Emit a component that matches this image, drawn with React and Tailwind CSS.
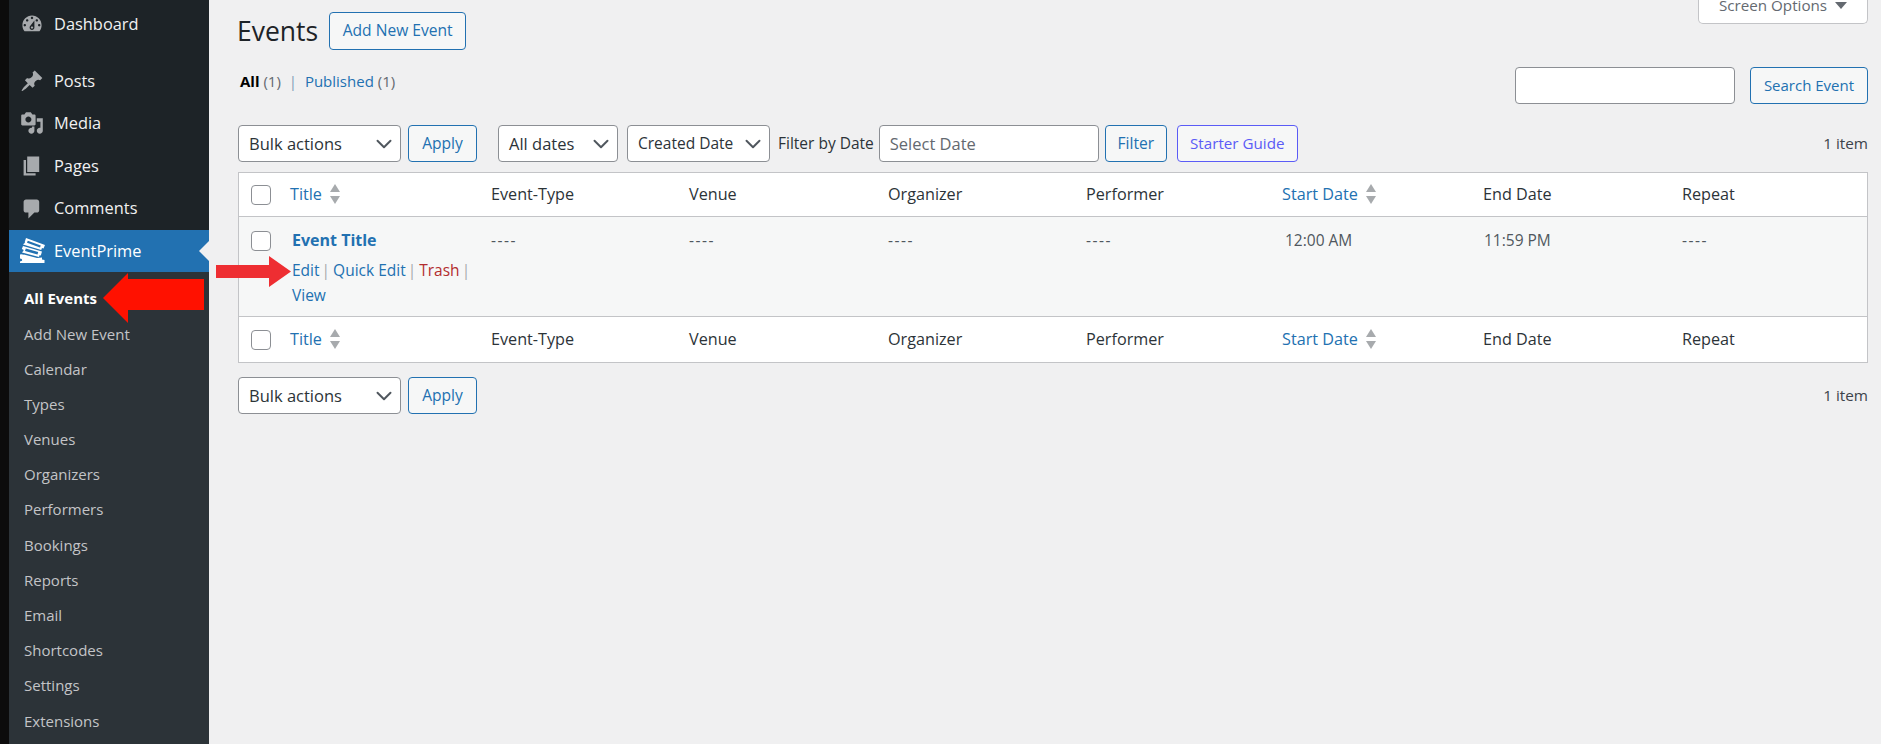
import { ChevronDown } from 'lucide-react'

const Icon = ({ d, className = '' }) => (
  <svg viewBox="0 0 20 20" className={`w-[24px] h-[24px] ${className}`} fill="currentColor">
    <path fillRule="evenodd" d={d} />
  </svg>
)

const icons = {
  dashboard: 'M3.76 16h12.48c1.1-1.37 1.76-3.11 1.76-5 0-4.42-3.58-8-8-8s-8 3.58-8 8c0 1.89.66 3.63 1.76 5zM10 4c.55 0 1 .45 1 1s-.45 1-1 1-1-.45-1-1 .45-1 1-1zM6 6c.55 0 1 .45 1 1s-.45 1-1 1-1-.45-1-1 .45-1 1-1zm8 0c.55 0 1 .45 1 1s-.45 1-1 1-1-.45-1-1 .45-1 1-1zm-5.37 5.55L12 7v6c0 1.1-.9 2-2 2s-2-.9-2-2c0-.57.24-1.08.63-1.45zM4 10c.55 0 1 .45 1 1s-.45 1-1 1-1-.45-1-1 .45-1 1-1zm12 0c.55 0 1 .45 1 1s-.45 1-1 1-1-.45-1-1 .45-1 1-1zm-5 3c0-.55-.45-1-1-1s-1 .45-1 1 .45 1 1 1 1-.45 1-1z',
  posts: 'M10.44 3.02l1.82-1.82 6.36 6.35-1.83 1.82c-1.05-.68-2.48-.57-3.41.36l-.75.75c-.92.93-1.04 2.35-.35 3.41l-1.83 1.82-2.41-2.41-2.8 2.79c-.42.42-3.38 2.71-3.8 2.29s1.86-3.39 2.28-3.81l2.79-2.79L4.1 9.36l1.83-1.82c1.05.69 2.48.57 3.4-.36l.75-.75c.93-.92 1.05-2.35.36-3.41z',
  media: 'M13 11V4c0-.55-.45-1-1-1h-1.67L9 1H5L3.67 3H2c-.55 0-1 .45-1 1v7c0 .55.45 1 1 1h10c.55 0 1-.45 1-1zM7 4.5c1.38 0 2.5 1.12 2.5 2.5S8.38 9.5 7 9.5 4.5 8.38 4.5 7 5.62 4.5 7 4.5zM14 6h5v10.5c0 1.38-1.12 2.5-2.5 2.5S14 17.88 14 16.5s1.12-2.5 2.5-2.5c.17 0 .34.02.5.05V9h-3V6zm-4 8.05V13h2v3.5c0 1.38-1.12 2.5-2.5 2.5S7 17.88 7 16.5 8.12 14 9.500 14c.17 0 .34.02.5.05z',
  pages: 'M6 15V2h10v13H6zm-1 1h8v2H3V5h2v11z',
  comments: 'M5 2h9c1.1 0 2 .9 2 2v7c0 1.1-.9 2-2 2h-2l-5 5v-5H5c-1.1 0-2-.9-2-2V4c0-1.1.9-2 2-2z',
}

// EventPrime logo: two tilted outlined tickets over a flat one
const TicketsIcon = () => (
  <svg viewBox="0 0 26 25" className="w-[26px] h-[25px] text-white" fill="currentColor">
    <path fillRule="evenodd" d="M7 0l19 7-1.500 3.500-1.500-.5-.8 2L4 6.500 5 5.500c.8-.3 1.100-1 .8-1.700L7 0zm1.800 2.800l-.8 2 13 4.700.8-2-13-4.700z" />
    <path fillRule="evenodd" d="M4 8l19 5.500-1.200 4-1.300-.3-.5 1.800L3 14.500l.8-1c.7-.4.9-1.100.6-1.700L2.800 11 4 8zm2.800 2.600l-.8 2.400 12.500 3.500.7-2.400-12.400-3.500z" />
    <path d="M1 16.500l2-.3c.5.500 1.200.6 1.800.3L18 20l5-.5v2L25.500 22v3H1v-1.500l2-.7c.4-.8 0-1.700-1-2L1 20.500v-4z" />
  </svg>
)

const topItems = [
  { name: 'Posts', icon: 'posts' },
  { name: 'Media', icon: 'media' },
  { name: 'Pages', icon: 'pages' },
  { name: 'Comments', icon: 'comments' },
]

const subItems = ['Add New Event', 'Calendar', 'Types', 'Venues', 'Organizers', 'Performers', 'Bookings', 'Reports', 'Email', 'Shortcodes', 'Settings', 'Extensions']

const gridCols = 'grid grid-cols-[51px_201px_198px_199px_198px_196px_201px_199px_1fr]'

const MenuItem = ({ name, icon }) => (
  <a className="flex items-center h-[42.6px] text-[#f0f0f1] text-[16.4px]">
    <span className="w-[45px] flex justify-center text-[#a7aaad]">
      <Icon d={icons[icon]} />
    </span>
    {name}
  </a>
)

const Sidebar = () => (
  <aside className="flex flex-col w-[209px] shrink-0 border-l-[9px] border-[#0c0c0c] bg-[#1d2327]">
    <div className="pt-[3px] pb-[14px]">
      <MenuItem name="Dashboard" icon="dashboard" />
    </div>
    {topItems.map((item) => (
      <MenuItem key={item.name} {...item} />
    ))}
    <a className="relative flex items-center h-[42px] bg-[#2271b1] text-white text-[16.4px]">
      <span className="w-[45px] flex justify-center">
        <TicketsIcon />
      </span>
      EventPrime
      <span className="absolute right-0 top-[11px] border-y-[10px] border-r-[10px] border-y-transparent border-r-[#f0f0f1]" />
    </a>
    <div className="flex-1 bg-[#2c3338] pt-[9px] text-[15px] text-[#c3c4c7]">
      <a className="flex items-center h-[35.2px] pl-[15px] font-bold text-white">All Events</a>
      {subItems.map((name) => (
        <a key={name} className="flex items-center h-[35.2px] pl-[15px]">{name}</a>
      ))}
    </div>
  </aside>
)

const OutlineButton = ({ children, className = '' }) => (
  <button className={`h-[37px] rounded-[4px] border border-[#2271b1] bg-[#f6f7f7] text-[#2271b1] text-[15.6px] ${className}`}>
    {children}
  </button>
)

const SelectBox = ({ label, className = '' }) => (
  <div className={`h-[37px] flex items-center justify-between rounded-[4px] border border-[#8c8f94] bg-white pl-[10px] pr-[3px] pt-[1px] text-[16.5px] text-[#2c3338] whitespace-nowrap ${className}`}>
    {label}
    <ChevronDown className="w-[26px] h-[26px] text-[#50575e]" strokeWidth={1.8} />
  </div>
)

const Checkbox = () => (
  <input type="checkbox" className="appearance-none w-[20px] h-[20px] rounded-[4px] border border-[#8c8f94] bg-white" />
)

const SortArrows = () => (
  <svg viewBox="0 0 10 20" className="w-[10px] h-[20px] text-[#a7aaad]" fill="currentColor">
    <path d="M5 0l5 8H0zM0 12h10l-5 8z" />
  </svg>
)

const SortLink = ({ children }) => (
  <a className="flex items-center gap-[8px] text-[#2271b1]">
    {children}
    <SortArrows />
  </a>
)

const HeaderRow = ({ className = '' }) => (
  <div className={`${gridCols} items-center bg-white text-[16.2px] text-[#2c3338] ${className}`}>
    <div className="pl-[12px] flex"><Checkbox /></div>
    <SortLink>Title</SortLink>
    <div>Event-Type</div>
    <div>Venue</div>
    <div>Organizer</div>
    <div>Performer</div>
    <SortLink>Start Date</SortLink>
    <div>End Date</div>
    <div>Repeat</div>
  </div>
)

const Dashes = () => <div className="pt-[10px] leading-[26px] tracking-[1.5px]">----</div>

const rowActions = [
  { label: 'Edit', color: 'text-[#2271b1]' },
  { label: 'Quick Edit', color: 'text-[#2271b1]' },
  { label: 'Trash', color: 'text-[#b32d2e]' },
]

const EventRow = () => (
  <div className={`${gridCols} h-[101px] bg-[#f6f7f7] border-y border-[#c3c4c7] text-[15.5px] text-[#50575e]`}>
    <div className="pl-[12px] pt-[14px] flex items-start"><Checkbox /></div>
    <div className="pl-[2px] pt-[10px]">
      <a className="block font-bold text-[16px] leading-[26px] text-[#2271b1]">Event Title</a>
      <div className="mt-[5px] leading-[25px] w-[182px] text-[#a7aaad]">
        {rowActions.map(({ label, color }) => (
          <span key={label}>
            <a className={`${color} whitespace-nowrap`}>{label}</a>
            <span className="ml-[2px] -mr-[1px]">|</span>{' '}
          </span>
        ))}
        <a className="text-[#2271b1]">View</a>
      </div>
    </div>
    <Dashes />
    <Dashes />
    <Dashes />
    <Dashes />
    <div className="pl-[3px] pt-[10px] leading-[26px]">12:00 AM</div>
    <div className="pl-[1px] pt-[10px] leading-[26px]">11:59 PM</div>
    <Dashes />
  </div>
)

export default function App() {
  return (
    <div className="relative flex h-[744px] overflow-hidden bg-[#f0f0f1] font-['Open_Sans',sans-serif]">
      <Sidebar />

      <main className="flex-1 pl-[29px] pr-[13px]">
        <div className="flex justify-between items-start pt-[12px]">
          <div className="flex items-center gap-[11px]">
            <h1 className="text-[26.5px] leading-[38px] text-[#1d2327] -ml-[1px]">Events</h1>
            <OutlineButton className="w-[137px] h-[38px]">Add New Event</OutlineButton>
          </div>
          <button className="-mt-[24px] w-[170px] h-[36px] flex items-center justify-center gap-[8px] rounded-b-[5px] border border-t-0 border-[#c3c4c7] bg-white text-[15.2px] text-[#646970]">
            Screen Options
            <span className="border-x-[6px] border-t-[7px] border-x-transparent border-t-[#646970]" />
          </button>
        </div>

        <div className="flex justify-between items-start mt-[17px]">
          <div className="mt-[2px] ml-[2px] text-[15px] leading-[24px] text-[#646970]">
            <b className="text-black">All</b> (1) <span className="mx-[4px] text-[#7e9cb8]">|</span> <a className="text-[#2271b1]">Published</a> (1)
          </div>
          <div className="flex gap-[15px]">
            <input className="w-[220px] h-[37px] rounded-[4px] border border-[#8c8f94] bg-white" />
            <OutlineButton className="w-[118px] !text-[15px]">Search Event</OutlineButton>
          </div>
        </div>

        <div className="flex items-center mt-[21px] mb-[10px]">
          <SelectBox label="Bulk actions" className="w-[163px]" />
          <OutlineButton className="w-[69px] ml-[7px]">Apply</OutlineButton>
          <SelectBox label="All dates" className="w-[120px] ml-[21px]" />
          <SelectBox label="Created Date" className="w-[143px] ml-[9px] !text-[15.5px]" />
          <span className="ml-[8px] text-[15.5px] text-[#2c3338] whitespace-nowrap">Filter by Date</span>
          <input
            placeholder="Select Date"
            className="w-[220px] h-[37px] ml-[5px] px-[10px] rounded-[4px] border border-[#8c8f94] bg-white text-[16.5px] placeholder:text-[#646970]"
          />
          <OutlineButton className="w-[62px] ml-[6px]">Filter</OutlineButton>
          <button className="w-[121px] h-[37px] ml-[10px] rounded-[4px] border border-[#5b5bf6] bg-[#f6f7f7] text-[#5b5bf6] text-[15.2px]">Starter Guide</button>
          <span className="ml-auto text-[15.3px] text-[#3c434a]">1 item</span>
        </div>

        <div className="border border-[#c3c4c7]">
          <HeaderRow className="h-[43px]" />
          <EventRow />
          <HeaderRow className="h-[45px]" />
        </div>

        <div className="flex items-center mt-[14px]">
          <SelectBox label="Bulk actions" className="w-[163px]" />
          <OutlineButton className="w-[69px] ml-[7px]">Apply</OutlineButton>
          <span className="ml-auto text-[15.3px] text-[#3c434a]">1 item</span>
        </div>
      </main>

      {/* red annotation arrows on top of the screenshot */}
      <svg viewBox="0 0 101 50" className="absolute left-[103px] top-[273px] w-[101px] h-[50px]" fill="#ff1100">
        <path d="M0 25L25 0v6h76v31H25v13z" />
      </svg>
      <svg viewBox="0 0 75 31" className="absolute left-[216px] top-[256px] w-[75px] h-[31px]" fill="#ee2e32">
        <path d="M0 9h53V0l22 15.500L53 31v-9H0z" />
      </svg>
    </div>
  )
}
